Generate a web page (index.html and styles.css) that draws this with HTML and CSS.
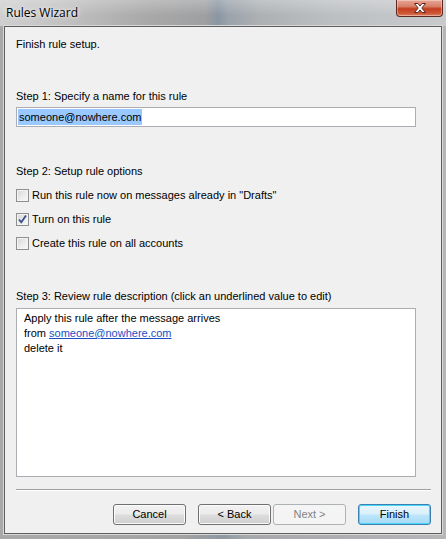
FILE: index.html
```html
<!DOCTYPE html>
<html>
<head>
<meta charset="utf-8">
<link rel="stylesheet" href="styles.css">
</head>
<body>
<div class="window">
  <div class="titlebar">
    <span class="title">Rules Wizard</span>
    <div class="close">
      <svg width="20" height="12" viewBox="0 0 20 12"><path d="M4.5 1.5h3.5l2 2.6 2-2.6h3.5l-3.7 4.5 3.7 4.5h-3.5l-2-2.6-2 2.6h-3.5l3.7-4.5z" fill="#fff" stroke="#5a2a22" stroke-width="1"/></svg>
    </div>
  </div>
  <div class="client">
    <div class="intro">Finish rule setup.</div>

    <div class="label step1">Step 1: Specify a name for this rule</div>
    <div class="textbox"><span class="sel">someone@nowhere.com</span></div>

    <div class="label step2">Step 2: Setup rule options</div>
    <div class="options">
      <div class="opt"><span class="cb"></span><span>Run this rule now on messages already in "Drafts"</span></div>
      <div class="opt"><span class="cb"><svg width="11" height="11" viewBox="0 0 11 11"><path d="M2 5.5l2.3 2.8L9 1.5" fill="none" stroke="#3b4f8d" stroke-width="1.8"/></svg></span><span>Turn on this rule</span></div>
      <div class="opt"><span class="cb"></span><span>Create this rule on all accounts</span></div>
    </div>

    <div class="label step3">Step 3: Review rule description (click an underlined value to edit)</div>
    <div class="desc">
      <div>Apply this rule after the message arrives</div>
      <div>from <a class="link">someone@nowhere.com</a></div>
      <div>delete it</div>
    </div>

    <div class="sep"></div>

    <div class="buttons">
      <button class="btn">Cancel</button>
      <div class="pair">
        <button class="btn">&lt; Back</button>
        <button class="btn disabled">Next &gt;</button>
      </div>
      <button class="btn default">Finish</button>
    </div>
  </div>
</div>
</body>
</html>
```

FILE: styles.css
```css
html, body {
  margin: 0;
  padding: 0;
}
body {
  width: 446px;
  height: 539px;
  overflow: hidden;
  background: linear-gradient(90deg, #a9a9a9 0%, #a4a4a4 40%, #8e98a2 50%, #a6a8ab 55%, #b4b6b8 100%);
  font-family: "Liberation Sans", Arial, sans-serif;
  font-size: 11px;
  color: #000;
}
.window {
  display: flex;
  flex-direction: column;
  height: 539px;
}
.titlebar {
  height: 26px;
  flex: none;
  display: flex;
  justify-content: space-between;
  align-items: flex-start;
  background:
    linear-gradient(180deg, rgba(255,255,255,0.25), rgba(255,255,255,0) 60%),
    linear-gradient(90deg, #cfcfcf 0px, #c2c2c2 60px, #a8a8a8 150px, #9fa0a2 205px, #8a96a3 218px, #9aa2ab 228px, #aeb1b4 260px, #bcbfc2 330px, #c8cacc 446px);
}
.title {
  font-family: "Open Sans", "Liberation Sans", sans-serif;
  font-size: 12px;
  margin: 4px 0 0 6px;
  color: #000;
  text-shadow: 0 0 6px rgba(255,255,255,0.9), 0 0 3px rgba(255,255,255,0.8);
}
.close {
  width: 47px;
  height: 17px;
  margin-right: 3px;
  box-sizing: border-box;
  border: 1px solid #5b2b22;
  border-top: none;
  border-radius: 0 0 4px 4px;
  background: linear-gradient(180deg, #e9a593 0%, #d8806a 40%, #c33d1f 55%, #cf5a38 85%, #e0866a 100%);
  box-shadow: inset 0 0 0 1px rgba(255,255,255,0.35);
  display: flex;
  align-items: center;
  justify-content: center;
}
.client {
  flex: 1;
  margin: 0 4px 5px 4px;
  border: 1px solid #5e5e5e;
  box-shadow: 0 0 0 1px #d8d8d8;
  background: #f0f0f0;
  padding: 10px 10px 0 11px;
  display: flex;
  flex-direction: column;
  line-height: 15px;
}
.intro {
  height: 15px;
}
.label {
  height: 15px;
}
.step1 { margin-top: 37px; }
.step2 { margin-top: 37px; }
.step3 { margin-top: 38px; }
.textbox {
  margin-top: 3px;
  width: 400px;
  height: 20px;
  box-sizing: border-box;
  border: 1px solid #abadb3;
  background: #fff;
  padding: 1px 0 0 1px;
  line-height: 16px;
}
.sel {
  display: inline-block;
  background: #99c9ff;
  padding: 0 1px;
  height: 16px;
}
.options {
  margin-top: 9px;
  display: flex;
  flex-direction: column;
  gap: 9px;
}
.opt {
  display: flex;
  align-items: center;
  gap: 3px;
  height: 15px;
}
.cb {
  width: 13px;
  height: 13px;
  box-sizing: border-box;
  border: 1px solid #8f8f8f;
  background: linear-gradient(135deg, #d5d5d5 0%, #eeeeee 60%, #f7f7f7 100%);
  box-shadow: inset 0 0 0 1px #f4f4f4;
  display: flex;
  align-items: center;
  justify-content: center;
  flex: none;
}
.desc {
  margin-top: 4px;
  width: 400px;
  height: 169px;
  box-sizing: border-box;
  border: 1px solid #abadb3;
  background: #fff;
  padding: 2px 7px;
}
.link {
  color: #1a4fc4;
  text-decoration: underline;
}
.sep {
  margin-top: 12px;
  width: 415px;
  height: 0;
  border-top: 1px solid #a0a0a0;
  border-bottom: 1px solid #ffffff;
}
.buttons {
  margin-top: 13px;
  display: flex;
  justify-content: flex-end;
  gap: 12px;
  width: 415px;
}
.pair {
  display: flex;
  gap: 2px;
}
.btn {
  width: 73px;
  height: 21px;
  box-sizing: border-box;
  border: 1px solid #707070;
  border-radius: 3px;
  background: linear-gradient(180deg, #f2f2f2 0%, #ebebeb 48%, #dddddd 52%, #cfcfcf 100%);
  box-shadow: inset 0 0 0 1px #fbfbfb;
  font-family: "Liberation Sans", Arial, sans-serif;
  font-size: 11px;
  color: #000;
  padding: 0;
  line-height: 17px;
}
.btn.disabled {
  border-color: #adb2b5;
  background: #f4f4f4;
  box-shadow: none;
  color: #838383;
}
.btn.default {
  border-color: #3c7fb1;
  background: linear-gradient(180deg, #eaf6fd 0%, #d9f0fc 48%, #bee6fd 52%, #a7d9f5 100%);
  box-shadow: inset 0 0 0 1px #48d7f9;
}
```
